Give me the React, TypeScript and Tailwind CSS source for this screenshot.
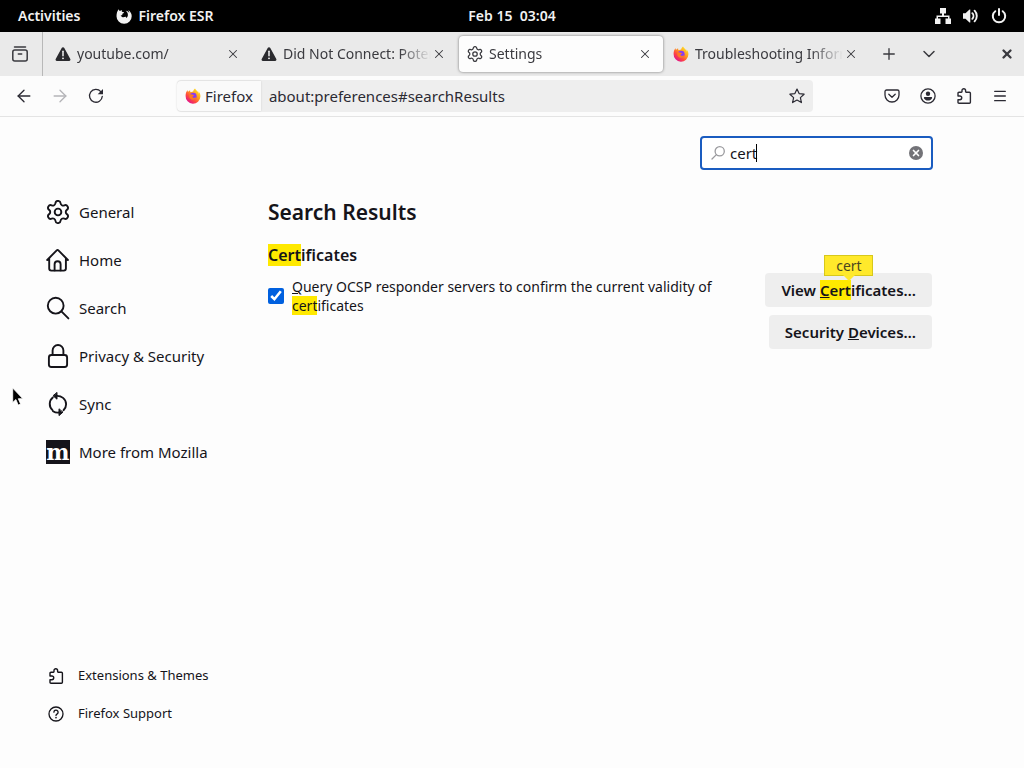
import { ReactNode, useState } from "react";
import { Settings, Search, X, Plus, ChevronDown, Menu, ArrowLeft, ArrowRight } from "lucide-react";

type IconProps = { className?: string };

const FirefoxLogo = ({ className }: IconProps) => (
  <svg viewBox="0 0 16 16" className={className} aria-hidden="true">
    <defs>
      <linearGradient id="flame" x1="0.85" y1="0.1" x2="0.2" y2="0.9">
        <stop offset="0" stopColor="#ffe226" />
        <stop offset="0.4" stopColor="#ff9a1f" />
        <stop offset="0.7" stopColor="#ff4a3d" />
        <stop offset="1" stopColor="#e31587" />
      </linearGradient>
    </defs>
    <path
      d="M14.9 5.6c-.3-.8-1-1.700-1.600-2 .5.9.7 1.700.8 2.300C13 3.500 11.400 2.600 10 .5c-1.200.8-1.700 2-1.800 3-.9 0-1.700.3-2.400.8-.6-.5-.8-1.300-.7-2.100-.9.4-1.600 1.100-2.100 1.700-.4-.5-.4-1.200-.2-1.800C1.200 3.400.6 5.600.6 8a7.400 7.400 0 0 0 14.800.5c.1-1-.1-2-.5-2.900z"
      fill="url(#flame)"
    />
    <circle cx="8.200" cy="8.200" r="3.400" fill="#8a3df0" />
    <path d="M4.400 6.700c1.200-.8 2.400-.6 3.300 0 .4.300 1.100.3 1.500.3-.2.8-1.500 1-1.700 1.700-.1 1 1.200 1.500 2.300 1 1.100-.4 1.700-.1 1.500.5-1 1.500-3.300 2.100-5 1.200-1.700-1-2.500-2.800-1.900-4.700z" fill="#ff7a1f" />
  </svg>
);

const FirefoxMono = ({ className }: IconProps) => (
  <svg viewBox="0 0 16 16" className={className} fill="currentColor" aria-hidden="true">
    <path
      fillRule="evenodd"
      d="M2.700 1.300c.2.800.6 1.300 1.100 1.700.8-.4 1.400-.9 2.400-1-.3.500-.5 1-.4 1.600.4.500 1.300.5 2.200.6-.1.800-1 1.100-1.600 1.600-.2.800.1 1.100-.3 1.500-.7-.3-1.300-.1-1.500.4.7.4 1.200 1.200 2.100 1.500 1.200.3 2-.5 3-.4.700.2.400.9-.1 1.200 1.500-.4 2.300-1.600 2.300-3.100 0-1.900-.9-3.100-2.200-4.100 2 .3 3 1.100 3.600 2.300 0-1.200-.4-2.200-1.100-3.200 2.200 1.400 3.500 3.600 3.500 6A7.500 7.500 0 0 1 8 15.700 7.500 7.500 0 0 1 .5 8.200c0-2.600.7-5.200 2.200-6.900z"
    />
  </svg>
);

const WarningIcon = ({ className }: IconProps) => (
  <svg viewBox="0 0 16 16" className={className} aria-hidden="true">
    <path d="M8 1.300c.6 0 1 .3 1.300.8l6 10.900c.5.900-.1 2-1.200 2H1.900c-1.100 0-1.700-1.100-1.200-2l6-10.900c.3-.5.700-.8 1.300-.8z" fill="#2a2a2e" />
    <path d="M8 5.300v4.500" stroke="#fff" strokeWidth="1.400" strokeLinecap="round" />
    <circle cx="8" cy="12.300" r=".9" fill="#fff" />
  </svg>
);

const TabsIcon = ({ className }: IconProps) => (
  <svg viewBox="0 0 16 16" className={className} fill="none" stroke="currentColor" strokeWidth="1.500" strokeLinecap="round" aria-hidden="true">
    <rect x=".8" y="4" width="14.400" height="11" rx="2" />
    <path d="M2.500 1h11M6.300 8h3.400" />
  </svg>
);

const ReloadIcon = ({ className }: IconProps) => (
  <svg viewBox="0 0 16 16" className={className} aria-hidden="true">
    <path d="M14.300 8.300A6.400 6.400 0 1 1 12.800 3.700" fill="none" stroke="currentColor" strokeWidth="1.300" strokeLinecap="round" />
    <path d="M15 1v5.300H9.700z" fill="currentColor" />
  </svg>
);

const StarIcon = ({ className }: IconProps) => (
  <svg viewBox="0 0 16 16" className={className} fill="none" stroke="currentColor" strokeWidth="1.200" strokeLinejoin="round" aria-hidden="true">
    <path d="M8 1l2.100 4.600 5 .6-3.700 3.400 1 5L8 12.100l-4.400 2.500 1-5L.9 6.200l5-.6z" />
  </svg>
);

const PocketIcon = ({ className }: IconProps) => (
  <svg viewBox="0 0 16 16" className={className} fill="none" stroke="currentColor" strokeWidth="1.300" strokeLinecap="round" strokeLinejoin="round" aria-hidden="true">
    <path d="M2.600 2h10.800c.9 0 1.600.7 1.600 1.600V7A7 7 0 0 1 1 7V3.600C1 2.700 1.700 2 2.600 2z" />
    <path d="M4.800 6.200L8 9.200l3.200-3" />
  </svg>
);

const AccountIcon = ({ className }: IconProps) => (
  <svg viewBox="0 0 16 16" className={className} aria-hidden="true">
    <circle cx="8" cy="8" r="7.100" fill="none" stroke="currentColor" strokeWidth="1.300" />
    <circle cx="8" cy="5.700" r="2.200" fill="currentColor" />
    <path d="M4.600 9h6.800c.5 0 .8.400.7.900-.4 1.500-2 2.600-4.100 2.600s-3.700-1.100-4.100-2.600c-.1-.5.200-.9.700-.9z" fill="currentColor" />
  </svg>
);

const PuzzleIcon = ({ className }: IconProps) => (
  <svg viewBox="0 0 16 16" className={className} fill="none" stroke="currentColor" strokeWidth="1.400" strokeLinejoin="round" aria-hidden="true">
    <path d="M2 8V5.200c0-.6.400-1 1-1h2.400c.4 0 .6-.3.6-.7V2.600a1.800 1.800 0 0 1 3.600 0v.9c0 .4.200.7.600.7h3.200c.6 0 1 .4 1 1v9c0 .6-.4 1-1 1H3c-.6 0-1-.4-1-1v-2.500h1.900a1.850 1.850 0 0 0 0-3.700H2z" />
  </svg>
);

const FindIcon = ({ className }: IconProps) => (
  <svg viewBox="0 0 16 16" className={className} fill="none" stroke="currentColor" strokeWidth="1.300" strokeLinecap="round" aria-hidden="true">
    <circle cx="9.700" cy="6.300" r="4.600" />
    <path d="M6.400 9.600L2 14" />
  </svg>
);

const NetworkIcon = ({ className }: IconProps) => (
  <svg viewBox="0 0 16 16" className={className} fill="currentColor" aria-hidden="true">
    <path d="M5 0h6v5.500H9v2h5.500v3H16V16h-5.500v-5.500H13V9H3v1.500h2.500V16H0v-5.500h1.500v-3H7v-2H5z" />
  </svg>
);

const VolumeIcon = ({ className }: IconProps) => (
  <svg viewBox="0 0 16 16" className={className} aria-hidden="true">
    <path d="M0 5.300h2.500L6.500 1.500h.8v13h-.8l-4-3.800H0z" fill="currentColor" />
    <path d="M9.300 5.200a4 4 0 0 1 0 5.600M11.600 2.700a7.500 7.500 0 0 1 0 10.600" fill="none" stroke="currentColor" strokeWidth="1.900" strokeLinecap="round" />
  </svg>
);

const PowerIcon = ({ className }: IconProps) => (
  <svg viewBox="0 0 16 16" className={className} fill="none" stroke="currentColor" strokeWidth="2" strokeLinecap="round" aria-hidden="true">
    <path d="M8 1v6M4.300 3.200a6.200 6.200 0 1 0 7.400 0" />
  </svg>
);

const HomeIcon = ({ className }: IconProps) => (
  <svg viewBox="0 0 24 24" className={className} fill="none" stroke="currentColor" strokeWidth="1.900" strokeLinecap="round" strokeLinejoin="round" aria-hidden="true">
    <path d="M1.200 12L10.700 2.300a1.200 1.200 0 0 1 1.700 0L21.900 12M3.200 10.300v10.200c0 1.200.9 2.100 2.100 2.100h12.500c1.200 0 2.100-.9 2.100-2.100V10.300" />
    <path d="M8.600 22.400v-6.100a3 3 0 0 1 6 0v6.100" />
  </svg>
);

const GearIcon = ({ className }: IconProps) => <Settings className={className} viewBox="1.200 1.200 21.600 21.600" strokeWidth={1.700} />;

const MagnifierIcon = ({ className }: IconProps) => (
  <svg viewBox="0 0 24 24" className={className} fill="none" stroke="currentColor" strokeWidth="1.900" strokeLinecap="round" aria-hidden="true">
    <circle cx="9.700" cy="9.700" r="7.900" />
    <path d="M15.400 15.400l7 7" />
  </svg>
);

const LockIcon = ({ className }: IconProps) => (
  <svg viewBox="0 0 24 24" className={className} fill="none" stroke="currentColor" strokeWidth="1.900" aria-hidden="true">
    <rect x="2.900" y="11" width="18.200" height="12" rx="2.500" />
    <path d="M6.600 11V6.400a5.400 5.400 0 0 1 10.800 0V11" />
  </svg>
);

const SyncIcon = ({ className }: IconProps) => (
  <svg viewBox="0 0 24 24" className={className} fill="none" stroke="currentColor" strokeWidth="1.900" strokeLinecap="round" aria-hidden="true">
    <path d="M6.800 5.600a8.200 8.200 0 0 0-.3 12.500M10.200 3.900c5-.5 9.900 3 9.900 8.300 0 2.500-1 4.500-2.600 6M7 19.200c1.800 1.100 3.700 1.600 5.800 1.300" />
    <path d="M11 .8v6.400L7.300 4zM13 17.200v6.400l3.700-3.200z" fill="currentColor" strokeWidth="1" strokeLinejoin="round" />
  </svg>
);

const HelpIcon = ({ className }: IconProps) => (
  <svg viewBox="0 0 16 16" className={className} fill="none" stroke="currentColor" strokeWidth="1.300" strokeLinecap="round" aria-hidden="true">
    <circle cx="8" cy="8" r="7" />
    <path d="M5.900 6.200a2.100 2.100 0 1 1 3.300 1.700c-.8.500-1.200.8-1.200 1.500" />
    <circle cx="8" cy="11.600" r=".3" fill="currentColor" />
  </svg>
);

const Mark = ({ children }: { children: ReactNode }) => (
  <mark className="bg-[#ffe900] text-inherit">{children}</mark>
);

const tabs = [
  { title: "youtube.com/", icon: <WarningIcon className="size-4 shrink-0" /> },
  { title: "Did Not Connect: Potential Security Issue", icon: <WarningIcon className="size-4 shrink-0" /> },
  { title: "Settings", icon: <GearIcon className="size-4 shrink-0" />, active: true },
  { title: "Troubleshooting Information", icon: <FirefoxLogo className="size-4 shrink-0" /> },
];

const categories = [
  { label: "General", icon: <GearIcon className="size-6" /> },
  { label: "Home", icon: <HomeIcon className="size-6" /> },
  { label: "Search", icon: <MagnifierIcon className="size-6" /> },
  { label: "Privacy & Security", icon: <LockIcon className="size-6" /> },
  { label: "Sync", icon: <SyncIcon className="size-6" /> },
  {
    label: "More from Mozilla",
    icon: (
      <span className="flex size-6 items-center justify-center bg-[#15141a] font-['DejaVu_Serif'] text-[22px] leading-5 font-bold text-white">
        m
      </span>
    ),
  },
];

const SystemBar = () => (
  <header className="grid h-8 grid-cols-[1fr_auto_1fr] items-center bg-black px-[18px] text-sm font-semibold text-[#f2f2f2]">
    <div className="flex items-center gap-9">
      <button>Activities</button>
      <button className="flex items-center gap-1.5">
        <FirefoxMono className="size-4" />
        Firefox ESR
      </button>
    </div>
    <button className="whitespace-pre">Feb 15  03:04</button>
    <button aria-label="System menu" className="-mr-px flex items-center gap-3 justify-self-end">
      <NetworkIcon className="size-4" />
      <VolumeIcon className="size-4" />
      <PowerIcon className="size-4" />
    </button>
  </header>
);

const TabStrip = () => (
  <div className="flex h-11 items-center bg-[#eaeaea] text-[#3a3a3f]">
    <button aria-label="Recent browsing" className="flex h-full w-[43px] shrink-0 items-center justify-center border-r border-[#b8b8b8] pr-0.5">
      <TabsIcon className="size-4" />
    </button>
    <div role="tablist" className="flex h-full min-w-0 items-center pl-[3px]">
      {tabs.map((tab) => (
        <div key={tab.title} className="w-[206px] min-w-0 px-px">
          <div
            role="tab"
            aria-selected={!!tab.active}
            className={`flex h-9 items-center rounded pr-2.5 pl-2 ${tab.active ? "bg-[#fdfdfd] shadow-[0_0_3px_rgba(0,0,0,0.5)]" : ""}`}
          >
            {tab.icon}
            <span className="ml-1.5 min-w-0 flex-1 overflow-hidden text-sm leading-6 whitespace-nowrap [mask-image:linear-gradient(to_left,transparent,black_32px)]">
              {tab.title}
            </span>
            <button aria-label={`Close ${tab.title}`} className="flex w-4 shrink-0 justify-center">
              <X className="size-3.5" strokeWidth={1.8} />
            </button>
          </div>
        </div>
      ))}
    </div>
    <button aria-label="New tab" className="ml-px flex w-9 shrink-0 justify-center">
      <Plus className="size-[18px]" strokeWidth={1.8} />
    </button>
    <button aria-label="List all tabs" className="ml-1 flex w-9 shrink-0 justify-center">
      <ChevronDown className="size-5" strokeWidth={1.8} />
    </button>
    <button aria-label="Close window" className="mr-2.5 ml-auto shrink-0">
      <X className="size-3.5" strokeWidth={4} />
    </button>
  </div>
);

const NavBar = () => (
  <div className="flex h-[41px] items-center border-b border-[#e4e4e4] bg-[#fcfcfc] px-4 text-[#2b2a33]">
    <div className="flex items-center gap-5">
      <button aria-label="Back"><ArrowLeft className="size-4 scale-125" strokeWidth={1.6} /></button>
      <button aria-label="Forward" disabled className="text-[#b4b4b8]"><ArrowRight className="size-4 scale-125" strokeWidth={1.6} /></button>
      <button aria-label="Reload"><ReloadIcon className="size-4" /></button>
    </div>
    <div className="mr-[71px] ml-[73px] flex h-8 min-w-0 flex-1 items-center rounded bg-[#eeeeee]">
      <button className="flex h-[30px] shrink-0 items-center gap-1 rounded-l bg-[#fafafa] pr-2 pl-2 text-[15px] shadow-[0_0_2px_rgba(0,0,0,0.15)]">
        <FirefoxLogo className="size-4" />
        Firefox
      </button>
      <input
        aria-label="Address"
        defaultValue="about:preferences#searchResults"
        className="min-w-0 flex-1 bg-transparent px-2 text-[15px] outline-none"
      />
      <button aria-label="Bookmark this page" className="mr-2"><StarIcon className="size-4" /></button>
    </div>
    <div className="flex items-center gap-5">
      <button aria-label="Save to Pocket"><PocketIcon className="size-4" /></button>
      <button aria-label="Account"><AccountIcon className="size-4" /></button>
      <button aria-label="Extensions"><PuzzleIcon className="size-4" /></button>
      <button aria-label="Menu"><Menu className="size-4" strokeWidth={2} /></button>
    </div>
  </div>
);

const Sidebar = () => (
  <nav className="flex w-60 shrink-0 flex-col justify-between pt-[71px] pb-[35px] pl-[46px]">
    <ul>
      {categories.map((c) => (
        <li key={c.label}>
          <a href="#" className="flex h-12 items-center gap-[9px] text-[15px]">
            {c.icon}
            {c.label}
          </a>
        </li>
      ))}
    </ul>
    <ul className="pl-0.5 text-[13px]">
      <li>
        <a href="#" className="flex h-[38px] items-center gap-3.5">
          <PuzzleIcon className="size-4" />
          Extensions &amp; Themes
        </a>
      </li>
      <li>
        <a href="#" className="flex h-[38px] items-center gap-3.5">
          <HelpIcon className="size-4" />
          Firefox Support
        </a>
      </li>
    </ul>
  </nav>
);

export default function App() {
  const [query, setQuery] = useState("cert");
  const [ocsp, setOcsp] = useState(true);

  return (
    <div className="flex min-h-screen flex-col bg-[#fdfdfd] font-['Noto_Sans',sans-serif] text-[#15141a]">
      <SystemBar />
      <TabStrip />
      <NavBar />

      <div className="flex flex-1">
        <Sidebar />
        <main className="min-w-0 max-w-[693px] flex-1 pt-[19px] pl-7">
          <div className="relative ml-auto flex h-[34px] w-[233px] items-center rounded border-2 border-[#1a5cc0] bg-white px-2">
            <FindIcon className="size-4 text-[#9a9a9e]" />
            <input
              aria-label="Find in Settings"
              value={query}
              onChange={(e) => setQuery(e.target.value)}
              className="min-w-0 flex-1 bg-transparent pl-1 text-[15px] caret-transparent outline-none"
            />
            {/* text cursor */}
            <span className="absolute left-[54px] h-[18px] w-px bg-black" />
            <button aria-label="Clear" onClick={() => setQuery("")} className="flex size-3.5 items-center justify-center rounded-full bg-[#737378] text-white">
              <X className="size-2.5" strokeWidth={4} />
            </button>
          </div>

          <h1 className="mt-[26px] text-[21px] leading-8 font-semibold">Search Results</h1>

          <div className="mt-[17px] flex justify-between pr-px">
            <section className="w-[460px]">
              <h2 className="text-base leading-5 font-semibold">
                <Mark>Cert</Mark>ificates
              </h2>
              <label className="mt-3 flex items-center gap-2 text-sm leading-[19px]">
                <input
                  type="checkbox"
                  checked={ocsp}
                  onChange={(e) => setOcsp(e.target.checked)}
                  className="size-4 shrink-0 accent-[#0060df]"
                />
                <span>
                  <u>Q</u>uery OCSP responder servers to confirm the current validity of <Mark>cert</Mark>ificates
                </span>
              </label>
            </section>

            <div className="flex flex-col items-end gap-2 pt-7 text-[15px] font-semibold">
              <button className="relative h-[34px] rounded bg-[#eeeeee] px-4">
                View <Mark><u>C</u>ert</Mark>ificates…
                <span className="absolute -top-[18px] left-[59px] flex h-[21px] w-[49px] items-center justify-center border border-[#d7c81c] bg-[#ffe92b] text-sm font-normal text-[#4a4620]">
                  cert
                  <svg viewBox="0 0 12 6" className="absolute top-full h-1.5 w-3">
                    <path d="M0 0h12L6 6z" fill="#ffe92b" />
                  </svg>
                </span>
              </button>
              <button className="h-[34px] rounded bg-[#eeeeee] px-4">
                Security <u>D</u>evices…
              </button>
            </div>
          </div>
        </main>
      </div>

      {/* mouse pointer */}
      <svg viewBox="0 0 12 20" className="pointer-events-none absolute top-[387px] left-[12px] h-5 w-3" aria-hidden="true">
        <path d="M.7 1v14.500l3.200-3 2.300 5.600 2.400-1-2.300-5.400h4.500z" fill="#000" stroke="#fff" strokeWidth=".8" />
      </svg>
    </div>
  );
}
